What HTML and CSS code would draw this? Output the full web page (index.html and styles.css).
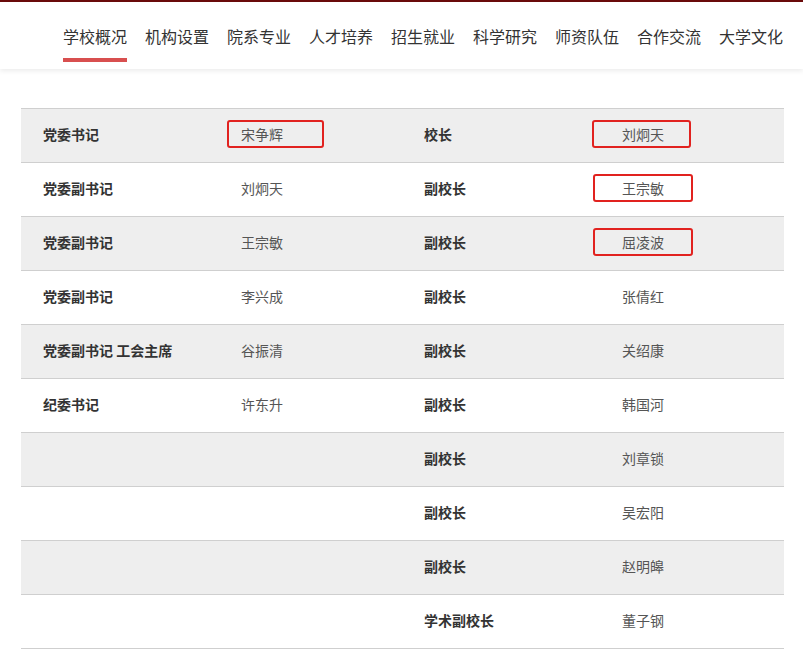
FILE: index.html
```html
<!DOCTYPE html>
<html lang="zh">
<head>
<meta charset="utf-8">
<title>学校概况</title>
<link rel="stylesheet" href="styles.css">
</head>
<body>
<div class="topbar"></div>
<header class="header">
  <nav class="nav">
    <a class="nav-item active">学校概况</a>
    <a class="nav-item">机构设置</a>
    <a class="nav-item">院系专业</a>
    <a class="nav-item">人才培养</a>
    <a class="nav-item">招生就业</a>
    <a class="nav-item">科学研究</a>
    <a class="nav-item">师资队伍</a>
    <a class="nav-item">合作交流</a>
    <a class="nav-item">大学文化</a>
  </nav>
</header>
<main class="content">
  <table class="leaders">
    <colgroup>
      <col class="c1"><col class="c2"><col class="c3"><col class="c4">
    </colgroup>
    <tbody>
      <tr><th>党委书记</th><td><span class="mark m1">宋争辉</span></td><th>校长</th><td><span class="mark m2">刘炯天</span></td></tr>
      <tr><th>党委副书记</th><td>刘炯天</td><th>副校长</th><td><span class="mark m3">王宗敏</span></td></tr>
      <tr><th>党委副书记</th><td>王宗敏</td><th>副校长</th><td><span class="mark m3">屈凌波</span></td></tr>
      <tr><th>党委副书记</th><td>李兴成</td><th>副校长</th><td>张倩红</td></tr>
      <tr><th>党委副书记 工会主席</th><td>谷振清</td><th>副校长</th><td>关绍康</td></tr>
      <tr><th>纪委书记</th><td>许东升</td><th>副校长</th><td>韩国河</td></tr>
      <tr><th></th><td></td><th>副校长</th><td>刘章锁</td></tr>
      <tr><th></th><td></td><th>副校长</th><td>吴宏阳</td></tr>
      <tr><th></th><td></td><th>副校长</th><td>赵明皞</td></tr>
      <tr><th></th><td></td><th>学术副校长</th><td>董子钢</td></tr>
    </tbody>
  </table>
</main>
</body>
</html>
```
FILE: styles.css
```css
* { box-sizing: border-box; }
html, body { margin: 0; padding: 0; background: #fff; }
body {
  font-family: "Microsoft YaHei", "Noto Sans CJK SC", sans-serif;
  color: #333;
  overflow: hidden;
}
.topbar { height: 2px; background: #6b0b0b; }
.header {
  height: 67px;
  background: #fff;
  box-shadow: 0 2px 5px rgba(0,0,0,0.08);
  position: relative;
  z-index: 1;
}
.nav {
  display: flex;
  padding-left: 63px;
  gap: 18px;
  height: 100%;
  white-space: nowrap;
}
.nav-item {
  font-size: 16px;
  color: #333;
  line-height: 20px;
  padding-top: 24px;
  height: 60px;
  border-bottom: 4px solid transparent;
  text-decoration: none;
  flex-shrink: 0;
  width: 64px;
}
.nav-item.active { border-bottom-color: #d84f4f; }

.content { padding: 39px 19px 0 21px; }
.leaders {
  width: 763px;
  border-collapse: collapse;
  table-layout: fixed;
  font-size: 14px;
}
.c1 { width: 198px; }
.c2 { width: 183px; }
.c3 { width: 198px; }
.c4 { width: 184px; }
.leaders tr { height: 54px; border-top: 1px solid #cfcfcf; border-bottom: 1px solid #cfcfcf; }
.leaders tr:nth-child(odd) { background: #eeeeee; }
.leaders th, .leaders td {
  padding: 0 0 3px 22px;
  line-height: 20px;
  text-align: left;
  vertical-align: middle;
  white-space: nowrap;
}
.leaders th { font-weight: bold; color: #333; }
.leaders td { color: #555; }
.mark { position: relative; display: inline-block; line-height: 20px; }
.mark::after {
  content: "";
  position: absolute;
  border: 2px solid #e1221f;
  border-radius: 3px;
  top: -4px;
  bottom: -4px;
}
.m1::after { left: -14px; right: -41px; }
.m2::after { left: -30px; right: -27px; }
.m3::after { left: -29px; right: -29px; }
```
